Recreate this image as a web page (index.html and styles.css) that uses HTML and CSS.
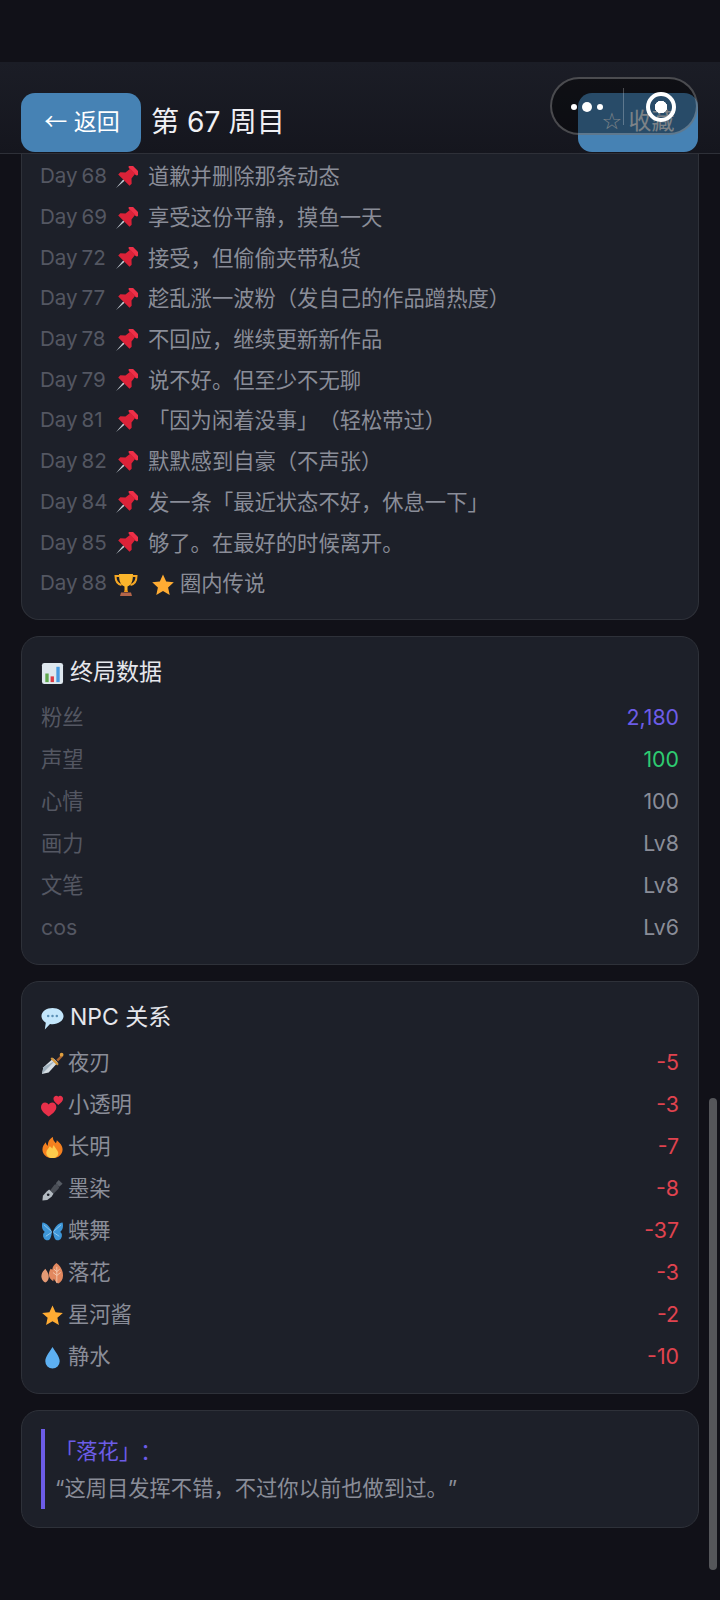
FILE: index.html
```html
<!DOCTYPE html>
<html lang="zh-CN">
  <head>
    <meta charset="UTF-8" />
    <meta name="viewport" content="width=device-width, initial-scale=1.0" />
    <title>第 67 周目</title>
    <link rel="stylesheet" href="styles.css">
  </head>
  <body>
    <!-- Emoji drawn once, used everywhere below -->
    <svg class="defs" aria-hidden="true">
      <symbol id="i-pin" viewBox="0 0 24 24">
        <g transform="rotate(45 12 12)">
          <path d="M11 15h2l-1 11z" fill="#c4ccd4"/>
          <rect x="5.500" y="-1.500" width="13" height="4.500" rx="2.200" fill="#ee3048"/>
          <path d="M8.500 2.500h7l.8 6 3.700 3.500v3H4v-3l3.700-3.500z" fill="#dc2238"/>
        </g>
      </symbol>
      <symbol id="i-trophy" viewBox="0 0 24 24">
        <path d="M5 3H1.500c0 5 1.500 8 6 9M19 3h3.500c0 5-1.500 8-6 9" fill="none" stroke="#f5a623" stroke-width="2"/>
        <path d="M5 1h14c0 7-1.500 11-5.500 12.500V17h-3v-3.500C6.500 12 5 8 5 1z" fill="#fbb62c"/>
        <path d="M10.500 17h3l.5 2h-4z" fill="#f09a1c"/>
        <path d="M7 19.500h10l1 3.500H6z" fill="#b5654a"/>
      </symbol>
      <symbol id="i-star" viewBox="0 0 24 24">
        <path d="M12 1.500l3.200 7 7.600.8-5.700 5.100 1.600 7.500L12 18.100l-6.700 3.800 1.600-7.500L1.200 9.300l7.600-.8z" fill="#ffac33"/>
      </symbol>
      <symbol id="i-chart" viewBox="0 0 24 24">
        <rect x="1" y="1" width="22" height="22" rx="2.500" fill="#dfe8ee"/>
        <rect x="4.500" y="12" width="3.500" height="9" fill="#5fa84e"/>
        <rect x="10" y="15" width="3.500" height="6" fill="#dd3b44"/>
        <rect x="16" y="5" width="3.500" height="16" fill="#4a9be0"/>
      </symbol>
      <symbol id="i-bubble" viewBox="0 0 24 24">
        <path d="M12 1c6.200 0 11.500 3.600 11.500 8.500S18.200 18 12 18c-.9 0-1.800-.1-2.600-.2L4 23.500l1-7.100C2.200 14.900.5 12.400.5 9.500.5 4.600 5.800 1 12 1z" fill="#c3e6fb"/>
        <circle cx="7.500" cy="9.500" r="1.300" fill="#5a8fb5"/>
        <circle cx="12" cy="9.500" r="1.300" fill="#5a8fb5"/>
        <circle cx="16.500" cy="9.500" r="1.300" fill="#5a8fb5"/>
      </symbol>
      <symbol id="i-dagger" viewBox="0 0 24 24">
        <path d="M1 23l1.500-7L13 6.500l4.500 4.500L8 21.500z" fill="#d5dde3"/>
        <path d="M1 23l1.500-7L15 8.800z" fill="#9fb0bc"/>
        <path d="M11.500 5.500l7 7-1.600 1.600-7-7z" fill="#d99a3a"/>
        <path d="M16 8l5-5 1.800 1.800-5 5z" fill="#a8622f"/>
        <circle cx="21.500" cy="2.800" r="2" fill="#e0a040"/>
      </symbol>
      <symbol id="i-hearts" viewBox="0 0 24 24">
        <path d="M8 23.500C2.800 19.800 0 17 0 13.500 0 10.800 2 8.800 4.300 8.800c1.500 0 2.900.8 3.700 2.100.8-1.300 2.200-2.100 3.700-2.100 2.300 0 4.300 2 4.300 4.700 0 3.500-2.800 6.300-8 10z" fill="#e8304a"/>
        <path d="M18 11.500c-3.300-2.400-5-4.200-5-6.500C13 3.200 14.300 1.800 16 1.800c.9 0 1.600.4 2 1.100 .4-.7 1.100-1.100 2-1.100 1.700 0 3 1.400 3 3.200 0 2.300-1.700 4.100-5 6.500z" fill="#e8304a"/>
      </symbol>
      <symbol id="i-fire" viewBox="0 0 24 24">
        <path d="M12 23C5.500 23 1.500 19 1.500 14c0-3.500 2-5.500 3.500-7.500.3 2 1 3 2.200 3.600C7 6.500 8.500 3 12.500 1c-.3 3 1.300 4.500 3 6.500.6-.9 1-1.900 1-3 3 2.500 6 5.500 6 9.500 0 5-4 9-10.500 9z" fill="#f4801f"/>
        <path d="M12 23c-3.800 0-6.500-2.300-6.500-5.500 0-3 2.600-4.500 3.800-7 .9 1.500 1.700 2 2.700 2.500.2-1.500.6-2.500 1.500-3.500.2 2 3 4.500 3.900 6.500 .6 1.200 .6 1.800 .6 2C18 20.700 15.800 23 12 23z" fill="#fdcb4c"/>
      </symbol>
      <symbol id="i-pen" viewBox="0 0 24 24">
        <path d="M15.500 5.500l3-3.500 4 4-3.500 3z" fill="#565b63"/>
        <path d="M14 7l3-1 2 4-1 1.500-5 5-3.500-3.500z" fill="#4a4e56"/>
        <path d="M8.500 12l4.500 4.500-2 3-4.500 3.500-5 .500.500-5L6 14z" fill="#b3bac1"/>
        <circle cx="7.500" cy="17.500" r="1.400" fill="#1c1f28"/>
      </symbol>
      <symbol id="i-butterfly" viewBox="0 0 24 24">
        <path d="M11.300 12C9.500 7 6 3 1.500 2.500.5 6 1 10 4 12.500c-2 1-2.500 4-1 6.500 1.500 2.500 5 3 6.500 .5 1-1.700 1.800-4.500 1.800-7.500z" fill="#3d96d8"/>
        <path d="M12.700 12C14.500 7 18 3 22.500 2.500c1 3.500.5 7.500-2.500 10 2 1 2.500 4 1 6.500-1.500 2.500-5 3-6.500 .5-1-1.700-1.800-4.500-1.800-7.500z" fill="#3d96d8"/>
        <path d="M11 12L3 5M13 12l8-7M11 13l-6 4M13 13l6 4" stroke="#a9d5f2" stroke-width=".8"/>
      </symbol>
      <symbol id="i-leaves" viewBox="0 0 24 24">
        <path d="M4.500 7C1.500 10 0 13 .5 16c.4 2.500 2 4.500 4 5.500 2-1 3.500-3 3.600-5.500C8.300 13 6.800 10 4.500 7z" fill="#e49a75"/>
        <path d="M16 1c-2.500 2-4 4-4.200 7-1.100-.9-1.800-1-1.800-1-1.800 3-2.500 6-1.200 9 .9 2 2.400 3.200 4.200 4-.2-.7 0-1.500 .5-2.500.7 2.200 2.300 4 4.500 5 3-1.500 5-4.500 5-8.500 0-5-2.500-10-7-13z" fill="#e2885f"/>
        <path d="M16.500 5v17M16.500 10l3-2.500M16.500 14l4-3M16.500 10l-3-2.500M16.500 14l-4-3" stroke="#f5cdb5" stroke-width=".9" fill="none"/>
      </symbol>
      <symbol id="i-drop" viewBox="0 0 24 24">
        <path d="M12 1c3.500 6 7.500 10 7.500 15a7.500 7.500 0 0 1-15 0C4.500 11 8.500 7 12 1z" fill="#5db0f2"/>
      </symbol>
    </svg>

    <div class="status-bar"></div>

    <header class="top-bar">
      <button type="button" class="btn back-btn"><span class="arrow">←</span> 返回</button>
      <h1 class="run-title">第 67 周目</h1>
      <button type="button" class="btn fav-btn"><span class="fav-star">☆</span> 收藏</button>
    </header>

    <!-- WeChat mini program capsule, sits over the header -->
    <div class="capsule">
      <span class="capsule-dots"><i></i><i class="big"></i><i></i></span>
      <span class="capsule-line"></span>
      <span class="capsule-ring"></span>
    </div>

    <main class="content">
      <section class="card timeline">
        <div class="day-row"><span class="day">Day 68</span><svg class="emoji"><use href="#i-pin"/></svg><span>道歉并删除那条动态</span></div>
        <div class="day-row"><span class="day">Day 69</span><svg class="emoji"><use href="#i-pin"/></svg><span>享受这份平静，摸鱼一天</span></div>
        <div class="day-row"><span class="day">Day 72</span><svg class="emoji"><use href="#i-pin"/></svg><span>接受，但偷偷夹带私货</span></div>
        <div class="day-row"><span class="day">Day 77</span><svg class="emoji"><use href="#i-pin"/></svg><span>趁乱涨一波粉（发自己的作品蹭热度）</span></div>
        <div class="day-row"><span class="day">Day 78</span><svg class="emoji"><use href="#i-pin"/></svg><span>不回应，继续更新新作品</span></div>
        <div class="day-row"><span class="day">Day 79</span><svg class="emoji"><use href="#i-pin"/></svg><span>说不好。但至少不无聊</span></div>
        <div class="day-row"><span class="day">Day 81</span><svg class="emoji"><use href="#i-pin"/></svg><span>「因为闲着没事」（轻松带过）</span></div>
        <div class="day-row"><span class="day">Day 82</span><svg class="emoji"><use href="#i-pin"/></svg><span>默默感到自豪（不声张）</span></div>
        <div class="day-row"><span class="day">Day 84</span><svg class="emoji"><use href="#i-pin"/></svg><span>发一条「最近状态不好，休息一下」</span></div>
        <div class="day-row"><span class="day">Day 85</span><svg class="emoji"><use href="#i-pin"/></svg><span>够了。在最好的时候离开。</span></div>
        <div class="day-row"><span class="day">Day 88</span><svg class="emoji"><use href="#i-trophy"/></svg><svg class="emoji star"><use href="#i-star"/></svg><span>圈内传说</span></div>
      </section>

      <section class="card">
        <h2 class="card-title"><svg class="emoji"><use href="#i-chart"/></svg>终局数据</h2>
        <div class="stat-row"><span class="stat-name">粉丝</span><span class="purple">2,180</span></div>
        <div class="stat-row"><span class="stat-name">声望</span><span class="green">100</span></div>
        <div class="stat-row"><span class="stat-name">心情</span><span>100</span></div>
        <div class="stat-row"><span class="stat-name">画力</span><span>Lv8</span></div>
        <div class="stat-row"><span class="stat-name">文笔</span><span>Lv8</span></div>
        <div class="stat-row"><span class="stat-name">cos</span><span>Lv6</span></div>
      </section>

      <section class="card">
        <h2 class="card-title"><svg class="emoji"><use href="#i-bubble"/></svg>NPC 关系</h2>
        <div class="stat-row"><span class="npc"><svg class="emoji"><use href="#i-dagger"/></svg>夜刃</span><span class="red">-5</span></div>
        <div class="stat-row"><span class="npc"><svg class="emoji"><use href="#i-hearts"/></svg>小透明</span><span class="red">-3</span></div>
        <div class="stat-row"><span class="npc"><svg class="emoji"><use href="#i-fire"/></svg>长明</span><span class="red">-7</span></div>
        <div class="stat-row"><span class="npc"><svg class="emoji"><use href="#i-pen"/></svg>墨染</span><span class="red">-8</span></div>
        <div class="stat-row"><span class="npc"><svg class="emoji"><use href="#i-butterfly"/></svg>蝶舞</span><span class="red">-37</span></div>
        <div class="stat-row"><span class="npc"><svg class="emoji"><use href="#i-leaves"/></svg>落花</span><span class="red">-3</span></div>
        <div class="stat-row"><span class="npc"><svg class="emoji"><use href="#i-star"/></svg>星河酱</span><span class="red">-2</span></div>
        <div class="stat-row"><span class="npc"><svg class="emoji"><use href="#i-drop"/></svg>静水</span><span class="red">-10</span></div>
      </section>

      <section class="card quote-card">
        <blockquote class="quote">
          <div class="quote-name">「落花」：</div>
          <div>“这周目发挥不错，不过你以前也做到过。”</div>
        </blockquote>
      </section>
    </main>

    <div class="scroll-thumb"></div>
  </body>
</html>
```

FILE: styles.css
```css
body {
  margin: 0;
  height: 100vh;
  overflow: hidden;
  display: flex;
  flex-direction: column;
  position: relative;
  background-color: #111118;
  color: #8a8d98;
  font-family: "Inter", "Noto Sans CJK SC", sans-serif;
  font-size: 21.3px;
  line-height: 30px;
  text-spacing-trim: space-all;
}

.defs {
  position: absolute;
  width: 0;
  height: 0;
}

.status-bar {
  height: 62px;
  flex-shrink: 0;
}

.top-bar {
  display: flex;
  align-items: center;
  gap: 10px;
  height: 92px;
  padding: 31px 22px 1px 21px;
  box-sizing: border-box;
  flex-shrink: 0;
  background: linear-gradient(#1b1d26, #15161e);
  border-bottom: 1px solid #2e3038;
}

.btn {
  height: 59px;
  width: 120px;
  padding: 0 0 3px 0;
  border: none;
  border-radius: 14px;
  background-color: #4682b4;
  font-family: inherit;
  font-size: 23px;
  line-height: 30px;
  color: #fff;
}

.back-btn {
  padding-left: 2px;
}

.arrow {
  font-family: "Noto Sans CJK SC", sans-serif;
}

.fav-btn {
  margin-left: auto;
  color: #d8e0e8;
}

.fav-star {
  font-family: "DejaVu Sans", sans-serif;
}

.run-title {
  margin: 0 0 2px 0;
  font-size: 28.2px;
  font-weight: 400;
  line-height: 36px;
  color: #f0f0f4;
}

.capsule {
  position: absolute;
  left: 550px;
  top: 77px;
  width: 148px;
  height: 58px;
  box-sizing: border-box;
  border: 2px solid rgba(255, 255, 255, 0.25);
  border-radius: 29px;
  background-color: rgba(0, 0, 0, 0.42);
}

.capsule-dots {
  position: absolute;
  left: 19px;
  top: 18px;
  display: flex;
  align-items: center;
  gap: 5px;
  height: 20px;
}

.capsule-dots i {
  width: 6px;
  height: 6px;
  border-radius: 50%;
  background-color: #fff;
}

.capsule-dots i.big {
  width: 10px;
  height: 10px;
}

.capsule-line {
  position: absolute;
  left: 71px;
  top: 9px;
  width: 1px;
  height: 37px;
  background-color: rgba(255, 255, 255, 0.25);
}

.capsule-ring {
  position: absolute;
  left: 94px;
  top: 13px;
  width: 22px;
  height: 22px;
  border: 4px solid #fff;
  border-radius: 50%;
  background: radial-gradient(circle, #fff 0 6px, transparent 6.5px);
}

.content {
  display: flex;
  flex-direction: column;
  gap: 16px;
  padding: 0 21px;
}

.card {
  padding: 19px 19px 15.5px 19px;
  background-color: #1d2029;
  border: 1px solid #2e3139;
  border-radius: 18px;
}

.timeline {
  padding: 2px 19px 15px 18px;
  border-top: none;
  border-radius: 0 0 18px 18px;
}

.day-row {
  display: flex;
  align-items: center;
  height: 40.700px;
  white-space: nowrap;
}

.day {
  width: 74px;
  font-size: 20.600px;
  word-spacing: -2px;
  color: #545762;
}

.emoji {
  width: 23px;
  height: 23px;
  flex-shrink: 0;
  margin-top: 3px;
}

.day-row .emoji {
  width: 24px;
  height: 24px;
  margin-right: 10px;
}

.day-row .star {
  margin-left: 3px;
  margin-right: 5px;
}

.card-title {
  display: flex;
  align-items: center;
  gap: 6px;
  height: 32px;
  margin: 0 0 8.5px 0;
  font-size: 23px;
  font-weight: 400;
  color: #e6e7ec;
}

.stat-row {
  display: flex;
  justify-content: space-between;
  align-items: center;
  height: 42px;
}

.stat-name {
  color: #545762;
}

.npc {
  display: flex;
  align-items: center;
  gap: 4px;
}

.purple {
  color: #6c5ce7;
}

.green {
  color: #2ecc71;
}

.red {
  color: #e0434f;
}

.quote-card {
  padding: 18px 19px;
}

.quote {
  margin: 0;
  padding: 4px 0 2px 10px;
  border-left: 4px solid #6c5ce7;
  line-height: 37px;
}

.quote-name {
  color: #6c5ce7;
}

.scroll-thumb {
  position: absolute;
  left: 709px;
  top: 1098px;
  width: 8px;
  height: 472px;
  border-radius: 4px;
  background-color: #55565a;
}
```
